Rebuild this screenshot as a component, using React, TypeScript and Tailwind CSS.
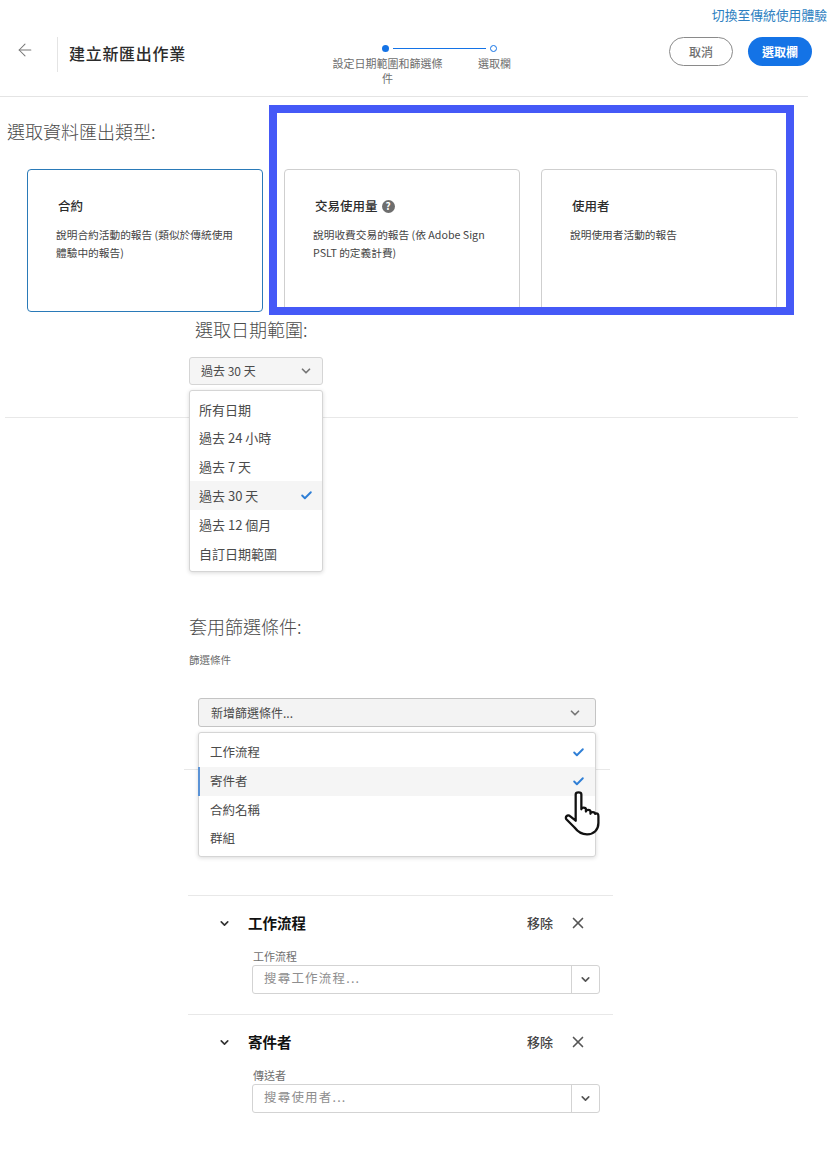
import { ChevronDown, X, ArrowLeft, Check } from "lucide-react";

const FONT = "font-['Noto_Sans_CJK_TC','Noto_Sans',sans-serif]";

const Card = ({
  title,
  desc,
  active,
  help,
}: {
  title: string;
  desc: string;
  active?: boolean;
  help?: boolean;
}) => (
  <div
    className={`w-[236px] h-[143px] rounded-[4px] border bg-white pl-[28px] pr-[20px] pt-[26px] ${
      active ? "border-[#2a7ab8]" : "border-[#cfcfcf]"
    }`}
  >
    <div className="flex items-center gap-[4px] pl-[2px] text-[12.5px] font-medium leading-[20px] text-[#2c2c2c]">
      {title}
      {help && (
        <span className="flex h-[13px] w-[13px] items-center justify-center rounded-full bg-[#6e6e6e] text-[10px] font-bold leading-none text-white">
          ?
        </span>
      )}
    </div>
    <p className="mt-[10px] text-[10.7px] leading-[18px] text-[#444]">{desc}</p>
  </div>
);

const MenuRow = ({
  label,
  checked,
  hover,
  bar,
  big,
}: {
  label: string;
  checked?: boolean;
  hover?: boolean;
  bar?: boolean;
  big?: boolean;
}) => (
  <div
    className={`flex h-[28.8px] items-center justify-between text-[#4b4b4b] ${
      big ? "pl-[9px] pr-[9px] text-[13px]" : "pr-[10px] text-[12.5px]"
    } ${hover ? "bg-[#f5f5f5]" : ""} ${
      bar ? "ml-[-1px] border-l-2 border-[#5b93d6] pl-[10px]" : big ? "" : "pl-[11px]"
    }`}
  >
    <span>{label}</span>
    {checked && <Check size={13} strokeWidth={3.5} className="text-[#2f7fd6]" />}
  </div>
);

const FilterBlock = ({
  name,
  label,
  placeholder,
}: {
  name: string;
  label: string;
  placeholder: string;
}) => (
  <div className="ml-[188px] h-[119px] w-[425px] border-t border-[#e8e8e8]">
    <div className="flex h-[54px] items-center pl-[30px] pr-[26px]">
      <ChevronDown size={13} strokeWidth={3} className="text-[#333]" />
      <span className="ml-[17px] text-[14.5px] font-bold text-[#111]">{name}</span>
      <span className="ml-auto text-[13px] font-medium text-[#444]">移除</span>
      <X size={18} strokeWidth={2.2} className="ml-[16px] text-[#555]" />
    </div>
    <div className="ml-[65px] text-[11px] leading-[13px] text-[#6e6e6e]">{label}</div>
    <div className="ml-[64px] mt-[2px] flex h-[29px] w-[348px] rounded-[3px] border border-[#d3d3d3]">
      <div className="flex-1 pl-[11px] text-[12.5px] leading-[24px] tracking-[1.2px] text-[#8e8e8e]">
        {placeholder}
      </div>
      <div className="flex w-[28px] items-center justify-center border-l border-[#d3d3d3]">
        <ChevronDown size={13} strokeWidth={3} className="text-[#555]" />
      </div>
    </div>
  </div>
);

export default function App() {
  return (
    <div className={`relative h-[1173px] w-[830px] overflow-hidden bg-white ${FONT}`}>
      <div className="h-[26px] pr-[3px] pt-[5px] text-right text-[12.8px] leading-[20px] text-[#2d7fc1]">
        切換至傳統使用體驗
      </div>

      <header className="flex h-[71px] w-[808px] border-b border-[#e4e4e4] pt-[11px]">
        <div className="flex w-[57px] justify-center pt-[3px]">
          <ArrowLeft size={20} strokeWidth={1.25} className="ml-[-8px] text-[#777]" />
        </div>
        <div className="h-[35px] w-[275px] border-l border-[#e4e4e4] pl-[11px] text-[16px] font-medium leading-[32px] tracking-[0.7px] text-[#2c2c2c]">
          建立新匯出作業
        </div>
        <div className="w-[190px]">
          <div className="mt-[8px] flex items-center pl-[50px]">
            <span className="h-[7px] w-[7px] rounded-full bg-[#1473e6]" />
            <span className="ml-[4px] h-px w-[93px] bg-[#1473e6]" />
            <span className="ml-[4px] h-[7px] w-[7px] rounded-full border border-[#1473e6]" />
          </div>
          <div className="mt-[4px] flex text-[11px] leading-[15px] text-[#6e6e6e]">
            <span className="w-[111px] text-center">設定日期範圍和篩選條件</span>
            <span className="ml-[35px]">選取欄</span>
          </div>
        </div>
        <div className="ml-auto flex gap-[15px]">
          <button className="h-[29px] w-[64px] rounded-full border border-[#8a8a8a] text-[12px] font-medium text-[#6e6e6e]">
            取消
          </button>
          <button className="mr-[-4px] h-[29px] w-[64px] rounded-full bg-[#1473e6] text-[12px] font-bold text-white">
            選取欄
          </button>
        </div>
      </header>

      <h2 className="pl-[7px] pt-[21px] text-[18px] font-light leading-[26px] text-[#4b4b4b]">
        選取資料匯出類型:
      </h2>
      <div className="mt-[25px] flex gap-[21px] pl-[27px]">
        <Card active title="合約" desc="說明合約活動的報告 (類似於傳統使用體驗中的報告)" />
        <Card help title="交易使用量" desc="說明收費交易的報告 (依 Adobe Sign PSLT 的定義計費)" />
        <Card title="使用者" desc="說明使用者活動的報告" />
      </div>
      {/* annotation frame */}
      <div className="absolute left-[269px] top-[105px] h-[210px] w-[525px] border-[8px] border-[#4559f7]" />

      <h2 className="pl-[195px] pt-[5px] text-[18px] font-light leading-[24px] text-[#4b4b4b]">
        選取日期範圍:
      </h2>
      <div className="relative ml-[189px] mt-[16px] w-[134px]">
        <div className="flex h-[28px] items-center justify-between rounded-[3px] border border-[#d5d5d5] bg-[#f5f5f5] pl-[11px] pr-[9px] text-[12px] text-[#4b4b4b]">
          過去 30 天
          <ChevronDown size={14} strokeWidth={3} className="text-[#777]" />
        </div>
        <div className="absolute left-0 top-[33px] z-10 w-[134px] rounded-[3px] border border-[#d5d5d5] bg-white pb-[3px] pt-[4px] shadow-[0_1px_4px_rgba(0,0,0,0.15)]">
          <MenuRow big label="所有日期" />
          <MenuRow big label="過去 24 小時" />
          <MenuRow big label="過去 7 天" />
          <MenuRow big label="過去 30 天" checked hover />
          <MenuRow big label="過去 12 個月" />
          <MenuRow big label="自訂日期範圍" />
        </div>
      </div>
      <div className="ml-[5px] mt-[32px] w-[793px] border-t border-[#e8e8e8]" />

      <h2 className="pl-[189px] pt-[195px] text-[18px] font-light leading-[26px] text-[#4b4b4b]">
        套用篩選條件:
      </h2>
      <div className="pl-[189px] pt-[14px] text-[10.5px] leading-[14px] text-[#6e6e6e]">篩選條件</div>

      <div className="relative ml-[198px] mt-[31px] w-[398px]">
        <div className="flex h-[29px] items-center justify-between rounded-[3px] border border-[#c4c4c4] bg-[#f3f3f3] pl-[12px] pr-[13px] text-[12px] text-[#4b4b4b]">
          新增篩選條件...
          <ChevronDown size={14} strokeWidth={3} className="text-[#777]" />
        </div>
        <div className="absolute left-0 top-[34px] z-10 w-[398px] rounded-[3px] border border-[#d5d5d5] bg-white pb-[3px] pt-[5px] shadow-[0_1px_4px_rgba(0,0,0,0.15)]">
          <MenuRow label="工作流程" checked />
          <MenuRow label="寄件者" checked hover bar />
          <MenuRow label="合約名稱" />
          <MenuRow label="群組" />
        </div>
        {/* pointer cursor */}
        <svg
          className="absolute left-[364px] top-[92px] z-20"
          width="41"
          height="50"
          viewBox="0 0 36 44"
        >
          <path
            d="M12 4c0-2.500 5-2.500 5 0v13c0-2 4-2 4 0v2c0-2 4-2 4 0v2c0-2 4-2 4 0c2-1 3 0 3 2v6c0 6-4 10-10 10c-5 0-8-2-11-6l-7-7c-2-2 1-5 3-3l5 4z"
            fill="#fff"
            stroke="#111"
            strokeWidth="2"
            strokeLinejoin="round"
          />
        </svg>
      </div>
      <div className="ml-[184px] mt-[42px] w-[426px] border-t border-[#e8e8e8]" />

      <div className="mt-[125px]">
        <FilterBlock name="工作流程" label="工作流程" placeholder="搜尋工作流程..." />
        <FilterBlock name="寄件者" label="傳送者" placeholder="搜尋使用者..." />
      </div>
    </div>
  );
}
